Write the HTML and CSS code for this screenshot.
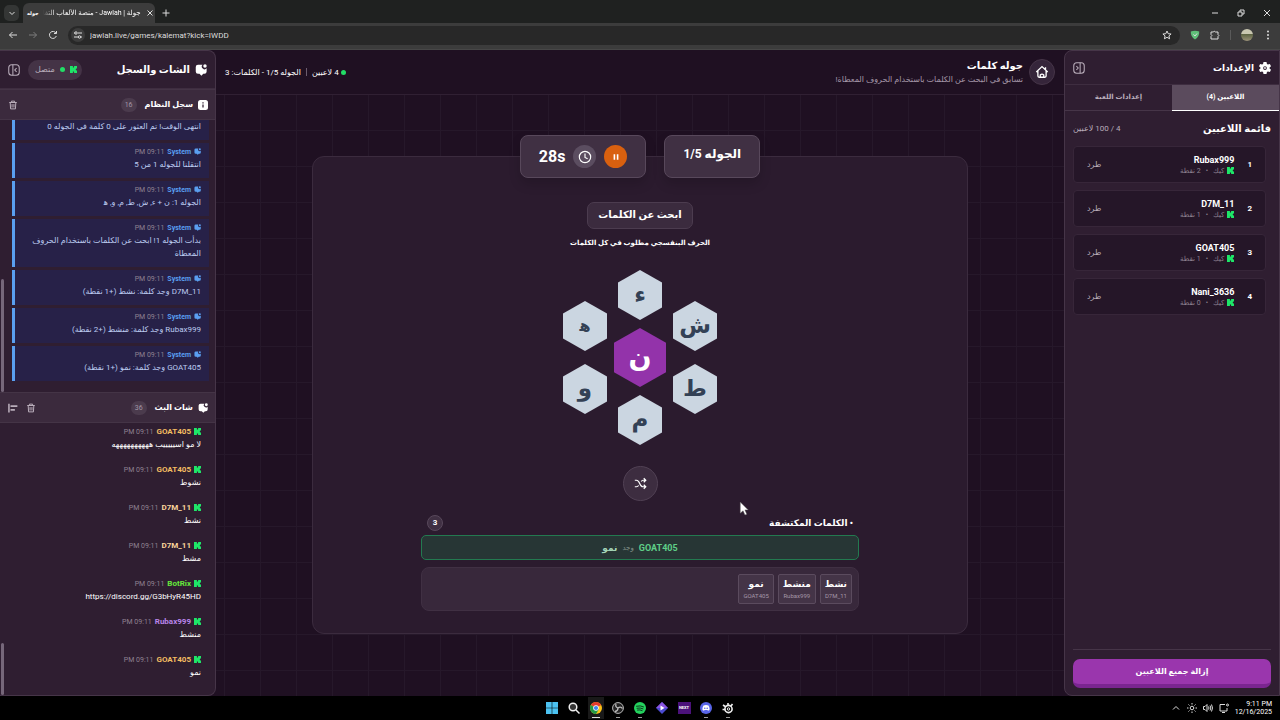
FILE: index.html
```
<!DOCTYPE html>
<html lang="ar">
<head>
    <meta charset="UTF-8">
    <meta name="viewport" content="width=device-width, initial-scale=1.0">
    <title>جولة | Jawlah</title>
    <link rel="stylesheet" href="styles.css">
</head>
<body>
    <svg class="sprite" aria-hidden="true">
        <symbol id="kick" viewBox="0 0 12 12"><path fill="currentColor" d="M0 0h5v3h1V2h1V0h5v4h-1v1h-1v2h1v1h1v4H7v-2H6V9H5v3H0z"/></symbol>
        <symbol id="chat" viewBox="0 0 16 16"><path fill="currentColor" d="M4 1h6a3.500 3.500 0 0 0 5.500 4.800V10a3 3 0 0 1-3 3H11l-2.500 2.500L6 13H4a3 3 0 0 1-3-3V4a3 3 0 0 1 3-3z"/><circle fill="currentColor" cx="13.300" cy="2.700" r="2.300"/></symbol>
        <symbol id="info" viewBox="0 0 16 16"><rect x="0" y="0" width="16" height="16" rx="4" fill="currentColor"/><path stroke="#2f1e31" stroke-width="2" d="M8 7v5M8 3.500v2"/></symbol>
        <symbol id="trash" viewBox="0 0 16 16"><path fill="none" stroke="currentColor" stroke-width="1.600" d="M2 4h12M5.500 4V1.800h5V4M3.500 4l.6 10.200h7.800L12.500 4M6.500 6.500v5.500M9.500 6.500v5.500"/></symbol>
        <symbol id="panel" viewBox="0 0 16 16"><g fill="none" stroke="currentColor" stroke-width="1.400"><rect x="1" y="1" width="14" height="14" rx="4"/><path d="M6.500 1v14M11.500 5.500L9 8l2.500 2.500"/></g></symbol>
        <symbol id="gear" viewBox="0 0 16 16"><path fill="currentColor" fill-rule="evenodd" d="M6 0h4l.6 2.600 1.300.8L14.500 2.600l1.500 3-1.900 1.800v1.200L16 10.400l-1.500 3-2.600-.8-1.300.8L10 16H6l-.6-2.600-1.300-.8-2.600.8-1.500-3 1.900-1.800V7.400L0 5.600l1.500-3 2.600.8 1.300-.8zM8 5.500a2.500 2.500 0 1 0 0 5 2.500 2.500 0 0 0 0-5z"/><circle cx="8" cy="8" r="1.200" fill="currentColor"/></symbol>
    </svg>

    <header class="browser">
        <div class="tab-strip">
            <button class="tab-search" aria-label="Search tabs"><svg viewBox="0 0 10 10"><path d="M2.500 4L5 6.500 7.500 4"/></svg></button>
            <div class="tab">
                <span class="tab-icon">جوله</span>
                <span class="tab-title" dir="rtl">جولة | Jawlah - منصة الألعاب التفا</span>
                <button aria-label="Close tab"><svg viewBox="0 0 10 10"><path d="M2.500 2.500l5 5M7.500 2.500l-5 5"/></svg></button>
            </div>
            <button class="new-tab" aria-label="New tab"><svg viewBox="0 0 10 10"><path d="M5 1.500v7M1.500 5h7"/></svg></button>
            <div class="window-buttons">
                <button aria-label="Minimize"><svg viewBox="0 0 10 10"><path d="M2 5h6"/></svg></button>
                <button aria-label="Restore"><svg viewBox="0 0 10 10"><path d="M2 4h4v4H2zM4 4V2h4v4H6"/></svg></button>
                <button aria-label="Close"><svg viewBox="0 0 10 10"><path d="M2 2l6 6M8 2L2 8"/></svg></button>
            </div>
        </div>
        <div class="toolbar">
            <button aria-label="Back"><svg viewBox="0 0 10 10"><path d="M9 5H1.500M4.500 2l-3 3 3 3"/></svg></button>
            <button class="dim" aria-label="Forward"><svg viewBox="0 0 10 10"><path d="M1 5h7.500M5.500 2l3 3-3 3"/></svg></button>
            <button aria-label="Reload"><svg viewBox="0 0 10 10"><path d="M8.300 6A3.500 3.500 0 1 1 8 3.200M8.500 1v2.500H6"/></svg></button>
            <div class="address">
                <span class="site-info"><svg viewBox="0 0 10 10"><path d="M1 3h1M5 3h4M1 7h4M8 7h1"/><circle cx="3" cy="3" r="1.200"/><circle cx="6.500" cy="7" r="1.200"/></svg></span>
                <input type="text" aria-label="Address" value="jawlah.live/games/kalemat?kick=IWDD">
                <button aria-label="Bookmark"><svg viewBox="0 0 10 10"><path d="M5 1l1.200 2.700 2.900.3-2.200 1.900.7 2.900L5 7.300 2.400 8.800l.7-2.900L.9 4l2.900-.3z"/></svg></button>
            </div>
            <button aria-label="AdGuard"><svg viewBox="0 0 10 10"><path class="shield" d="M.8 1.500Q5 .2 9.200 1.500 9.500 6.500 5 9.500.5 6.500.8 1.500z"/><path d="M3.300 4.500L5 6l2-2.500"/></svg></button>
            <button aria-label="Extensions"><svg viewBox="0 0 10 10"><path d="M1 2h2.500q.5-1.800 2 0H8v2.500q1.800.8 0 2V9H1V6.500q1.800-1 0-2z"/></svg></button>
            <span class="toolbar-divider"></span>
            <button class="avatar" aria-label="Profile"></button>
            <button aria-label="Menu"><svg class="filled" viewBox="0 0 10 10"><circle cx="5" cy="1.500" r="1"/><circle cx="5" cy="5" r="1"/><circle cx="5" cy="8.500" r="1"/></svg></button>
        </div>
    </header>

    <div class="app" dir="rtl">
        <aside class="panel settings">
            <div class="panel-header">
                <h2><svg class="icon-md"><use href="#gear"/></svg>الإعدادات</h2>
                <button class="icon-button flip" aria-label="إخفاء الإعدادات"><svg class="icon-md"><use href="#panel"/></svg></button>
            </div>
            <nav class="tabs">
                <button class="active">اللاعبين (4)</button>
                <button>إعدادات اللعبة</button>
            </nav>
            <div class="players">
                <div class="players-title">
                    <h3>قائمة اللاعبين</h3>
                    <span>4 / 100 لاعبين</span>
                </div>
                <ol>
                    <li><b>1</b><div><strong>Rubax999</strong><small><svg class="kick"><use href="#kick"/></svg>كيك <i>•</i> 2 نقطة</small></div><button>طرد</button></li>
                    <li><b>2</b><div><strong>D7M_11</strong><small><svg class="kick"><use href="#kick"/></svg>كيك <i>•</i> 1 نقطة</small></div><button>طرد</button></li>
                    <li><b>3</b><div><strong>GOAT405</strong><small><svg class="kick"><use href="#kick"/></svg>كيك <i>•</i> 1 نقطة</small></div><button>طرد</button></li>
                    <li><b>4</b><div><strong>Nani_3636</strong><small><svg class="kick"><use href="#kick"/></svg>كيك <i>•</i> 0 نقطة</small></div><button>طرد</button></li>
                </ol>
            </div>
            <div class="settings-footer"><button>إزالة جميع اللاعبين</button></div>
        </aside>

        <main class="game">
            <header class="game-header">
                <a class="home" href="#" aria-label="الرئيسية"><svg viewBox="0 0 16 16"><path d="M1.500 8L8 1.800 14.500 8M3.300 6.500v6.200q0 1.300 1.300 1.300h6.800q1.300 0 1.300-1.300V6.500M12 5V2.500M6 14v-2.500q2-2 4 0V14"/></svg></a>
                <div class="game-title">
                    <h1>جوله كلمات</h1>
                    <p>تسابق في البحث عن الكلمات باستخدام الحروف المعطاة!</p>
                </div>
                <div class="game-status">
                    <span class="dot"></span><span>4 لاعبين</span><span class="bar"></span><span>الجوله 1/5 - الكلمات: 3</span>
                </div>
            </header>

            <div class="stage">
                <div class="pills">
                    <div class="pill round">الجوله 1/5</div>
                    <div class="pill timer">
                        <button class="pause" aria-label="إيقاف مؤقت"><svg viewBox="0 0 10 10"><path d="M3 1.500v7M7 1.500v7"/></svg></button>
                        <span class="clock"><svg viewBox="0 0 16 16"><circle cx="8" cy="8" r="6.500"/><path d="M8 4v4.500l3 1.500"/></svg></span>
                        <span>28s</span>
                    </div>
                </div>
                <section class="board">
                    <h2 class="prompt">ابحث عن الكلمات</h2>
                    <p class="hint">الحرف البنفسجي مطلوب في كل الكلمات</p>
                    <div class="letters">
                        <div class="letter-column side">
                            <button class="hex">ش</button>
                            <button class="hex">ط</button>
                        </div>
                        <div class="letter-column">
                            <button class="hex">ء</button>
                            <button class="hex center">ن</button>
                            <button class="hex">م</button>
                        </div>
                        <div class="letter-column side">
                            <button class="hex small">ه&zwj;</button>
                            <button class="hex">و</button>
                        </div>
                    </div>
                    <button class="shuffle" aria-label="خلط"><svg viewBox="0 0 16 16"><path d="M1 4h2q2.500 0 4 4t4 4h3.500M1 12h2q1.700 0 2.700-1.500M9 5.500Q9.800 4 11 4h3.500M12 1.500L14.500 4 12 6.500M12 9.500l2.500 2.500-2.500 2.500"/></svg></button>
                    <div class="found">
                        <div class="found-title">
                            <h3>• الكلمات المكتشفة</h3>
                            <span>3</span>
                        </div>
                        <div class="found-alert"><strong>GOAT405</strong><small>وجد</small><b>نمو</b></div>
                        <ul class="words">
                            <li><b>نشط</b><small>D7M_11</small></li>
                            <li><b>منشط</b><small>Rubax999</small></li>
                            <li><b>نمو</b><small>GOAT405</small></li>
                        </ul>
                    </div>
                </section>
            </div>
            <svg class="cursor" viewBox="0 0 10 16"><path d="M1 1v12l3-2.500L6 15l2-1-2-4.500h3.500z"/></svg>
        </main>

        <aside class="panel chat">
            <div class="panel-header chat-header">
                <h2><svg class="icon-md"><use href="#chat"/></svg>الشات والسجل</h2>
                <span class="connected"><svg class="kick"><use href="#kick"/></svg><span class="dot"></span>متصل</span>
                <button class="icon-button" aria-label="إخفاء الشات"><svg class="icon-md"><use href="#panel"/></svg></button>
            </div>
            <div class="feed-header">
                <h3><svg class="icon-sm"><use href="#info"/></svg>سجل النظام</h3><span class="count">16</span>
                <button class="icon-button" aria-label="مسح السجل"><svg class="icon-sm"><use href="#trash"/></svg></button>
            </div>
            <div class="feed log">
                <article><p>انتهى الوقت! تم العثور على 0 كلمة في الجوله 0</p></article>
                <article><header><svg><use href="#chat"/></svg><b>System</b><time>09:11 PM</time></header><p>انتقلنا للجوله 1 من 5</p></article>
                <article><header><svg><use href="#chat"/></svg><b>System</b><time>09:11 PM</time></header><p>الجوله 1: ن + ء, ش, ط, م, و, ه&zwj;</p></article>
                <article><header><svg><use href="#chat"/></svg><b>System</b><time>09:11 PM</time></header><p>بدأت الجوله 1! ابحث عن الكلمات باستخدام الحروف المعطاة</p></article>
                <article><header><svg><use href="#chat"/></svg><b>System</b><time>09:11 PM</time></header><p>D7M_11 وجد كلمة: نشط (+1 نقطة)</p></article>
                <article><header><svg><use href="#chat"/></svg><b>System</b><time>09:11 PM</time></header><p>Rubax999 وجد كلمة: منشط (+2 نقطة)</p></article>
                <article><header><svg><use href="#chat"/></svg><b>System</b><time>09:11 PM</time></header><p>GOAT405 وجد كلمة: نمو (+1 نقطة)</p></article>
                <span class="scroll-thumb long"></span>
            </div>
            <div class="feed-header">
                <h3><svg class="icon-sm"><use href="#chat"/></svg>شات البث</h3><span class="count">36</span>
                <button class="icon-button" aria-label="مسح الشات"><svg class="icon-sm"><use href="#trash"/></svg></button>
                <button class="icon-button" aria-label="محاذاة"><svg class="icon-sm" viewBox="0 0 16 16"><path fill="none" stroke="currentColor" stroke-width="2.500" d="M1.500 1v14M4 5h11M4 11h7"/></svg></button>
            </div>
            <div class="feed stream">
                <article><header><svg><use href="#kick"/></svg><b class="gold">GOAT405</b><time>09:11 PM</time></header><p>لا مو اسيييييب ههههههههههه</p></article>
                <article><header><svg><use href="#kick"/></svg><b class="gold">GOAT405</b><time>09:11 PM</time></header><p>نشوط</p></article>
                <article><header><svg><use href="#kick"/></svg><b class="cream">D7M_11</b><time>09:11 PM</time></header><p>نشط</p></article>
                <article><header><svg><use href="#kick"/></svg><b class="cream">D7M_11</b><time>09:11 PM</time></header><p>مشط</p></article>
                <article><header><svg><use href="#kick"/></svg><b class="green">BotRix</b><time>09:11 PM</time></header><p>https://discord.gg/G3bHyR45HD</p></article>
                <article><header><svg><use href="#kick"/></svg><b class="violet">Rubax999</b><time>09:11 PM</time></header><p>منشط</p></article>
                <article><header><svg><use href="#kick"/></svg><b class="gold">GOAT405</b><time>09:11 PM</time></header><p>نمو</p></article>
                <span class="scroll-thumb short"></span>
            </div>
        </aside>
    </div>

    <footer class="taskbar">
        <div class="apps">
            <button aria-label="Start"><svg viewBox="0 0 12 12"><path fill="#4cc2f1" d="M0 0h5.700v5.700H0zM6.300 0H12v5.700H6.300zM0 6.300h5.700V12H0zM6.300 6.300H12V12H6.300z"/></svg></button>
            <button aria-label="Search"><svg viewBox="0 0 12 12"><circle cx="5" cy="5" r="3.800" fill="#333" stroke="#eee" stroke-width="1.500"/><path stroke="#eee" stroke-width="1.500" d="M8 8l3.500 3.500"/></svg></button>
            <button class="running current" aria-label="Chrome"><svg viewBox="0 0 12 12"><circle cx="6" cy="6" r="6" fill="#fbc116"/><path fill="#e33b2e" d="M6 6L.8 3A6 6 0 0 1 11.200 3z"/><path fill="#229a48" d="M6 6L.8 3A6 6 0 0 0 6 12l3-5z"/><circle cx="6" cy="6" r="2.800" fill="#fff"/><circle cx="6" cy="6" r="2.100" fill="#3f83f0"/></svg></button>
            <button class="running" aria-label="OBS"><svg viewBox="0 0 12 12"><circle cx="6" cy="6" r="5.400" fill="#222" stroke="#bbb"/><path fill="none" stroke="#bbb" stroke-width="1.300" d="M6 6Q3 5 4 2M6 6q2.500-2 4.500.5M6 6q0 3-3 3.500"/></svg></button>
            <button class="running" aria-label="Spotify"><svg viewBox="0 0 12 12"><circle cx="6" cy="6" r="6" fill="#24d35e"/><path fill="none" stroke="#10391e" stroke-linecap="round" d="M2.500 4.200q4-1 7 .6M3 6.200q3.300-.8 6 .6M3.500 8q2.500-.6 4.700.6"/></svg></button>
            <button aria-label="Media"><svg viewBox="0 0 12 12"><path fill="#4b4ad0" d="M6 0l6 6-6 6-6-6z"/><path fill="#8a54e0" d="M6 0l6 6H0z"/><path fill="#fff" d="M4.500 3.500L8.500 6l-4 2.500z"/></svg></button>
            <button class="running next" aria-label="Next">NEXT</button>
            <button class="running" aria-label="Discord"><svg viewBox="0 0 12 12"><circle cx="6" cy="6" r="6" fill="#5865e8"/><path fill="#fff" d="M3.500 3.500q2.500-1 5 0 1.300 2.200 1 4.500l-1.500.8-.6-.9H4.600l-.6.9L2.500 8q-.3-2.300 1-4.500z"/><circle cx="4.800" cy="6.200" r=".8" fill="#5865e8"/><circle cx="7.200" cy="6.200" r=".8" fill="#5865e8"/></svg></button>
            <button class="running" aria-label="SteelSeries"><svg viewBox="0 0 12 12"><g fill="none" stroke="#eee"><circle cx="6.500" cy="7" r="3.600" stroke-width="1.600"/><circle cx="6.500" cy="7" r="1.200"/><path stroke-width="1.600" d="M1 3l3 2M6 1v2.500M10.500 2L9 4M.5 7.500h3"/></g></svg></button>
        </div>
        <div class="tray">
            <svg viewBox="0 0 10 10"><path d="M2 6.500l3-3 3 3"/></svg>
            <svg viewBox="0 0 10 10"><circle cx="5" cy="5" r="1.800"/><path d="M5 0v1.500M5 8.500V10M0 5h1.500M8.500 5H10M1.500 1.500l1 1M7.500 7.500l1 1M8.500 1.500l-1 1M1.500 8.500l1-1"/></svg>
            <svg viewBox="0 0 10 10"><path d="M.5 3.500h1.500L4 1.500v7l-2-2H.5zM5.500 3.500q1 1.500 0 3M7 2.500q1.700 2.500 0 5M8.500 1.500q2 3.500 0 7"/></svg>
            <svg viewBox="0 0 10 10"><path d="M6 1.500H1v6.500h7V5M3 9.500h3"/><circle cx="8.500" cy="2" r="1"/></svg>
            <div class="date"><span>9:11 PM</span><span>12/16/2025</span></div>
        </div>
    </footer>
</body>
</html>
```
FILE: styles.css
```
* {
    box-sizing: border-box;
}
body {
    margin: 0;
    height: 100vh;
    display: flex;
    flex-direction: column;
    overflow: hidden;
    background: #000;
    color: #fff;
    font-family: Roboto, "DejaVu Sans", sans-serif;
    font-size: 8px;
}
h1, h2, h3, p, ul, ol {
    margin: 0;
    padding: 0;
    list-style: none;
}
button {
    display: flex;
    align-items: center;
    justify-content: center;
    padding: 0;
    border: 0;
    background: none;
    color: inherit;
    font: inherit;
}
small {
    font-size: 7px;
}
.sprite {
    display: none;
}

/* browser */
.browser svg, .tray svg {
    width: 10px;
    height: 10px;
    fill: none;
    stroke: #ddd;
    stroke-width: 1;
}
.browser svg.filled {
    fill: #ddd;
    stroke: none;
}
.tab-strip {
    display: flex;
    align-items: center;
    height: 23px;
    padding: 3px 4px 0;
    background: #1f2120;
}
.tab-search {
    width: 15px;
    height: 16px;
    border-radius: 5px;
    background: #343635;
}
.tab {
    display: flex;
    align-items: center;
    gap: 4px;
    width: 132px;
    height: 20px;
    margin-left: 4px;
    padding: 0 4px;
    border-radius: 6px 6px 0 0;
    background: #3c3c3c;
}
.tab-icon {
    font-size: 5px;
    font-weight: bold;
}
.tab-title {
    flex: 1;
    font-size: 7px;
    white-space: nowrap;
    mask-image: linear-gradient(to right, transparent, #000 12px);
}
.new-tab {
    margin-left: 6px;
}
.window-buttons {
    display: flex;
    gap: 16px;
    margin-left: auto;
    padding-right: 4px;
}
.toolbar {
    display: flex;
    align-items: center;
    gap: 10px;
    height: 27px;
    padding: 0 7px 2px 8px;
    background: #3c3c3c;
    border-bottom: 1px solid #474747;
}
.toolbar .dim {
    opacity: 0.4;
}
.address {
    flex: 1;
    display: flex;
    align-items: center;
    gap: 5px;
    height: 19px;
    padding: 0 8px 0 3px;
    border-radius: 10px;
    background: #282828;
}
.site-info {
    display: flex;
    padding: 2px;
    border-radius: 50%;
    background: #3c3c3c;
}
.address input {
    flex: 1;
    border: 0;
    padding: 0;
    background: none;
    color: #ddd;
    font: inherit;
}
.browser .shield {
    fill: #5fbf78;
    stroke: none;
}
.toolbar-divider {
    width: 1px;
    height: 10px;
    background: #5a5a5a;
}
.avatar {
    width: 12px;
    height: 12px;
    border-radius: 50%;
    background: linear-gradient(#c9c7b0 40%, #59613f 40%, #9b9279);
}

/* app */
.app {
    flex: 1;
    min-height: 0;
    display: grid;
    grid-template-columns: 216px 1fr 216px;
    background: #1f1022;
}
.panel {
    display: flex;
    flex-direction: column;
    min-height: 0;
    overflow: hidden;
    background: #2f1e31;
    border: 1px solid #463548;
}
.settings {
    border-radius: 8px 0 0 8px;
}
.chat {
    border-radius: 0 8px 8px 0;
    border-left: 0;
}
.panel-header {
    display: flex;
    align-items: center;
    justify-content: space-between;
    height: 34px;
    padding: 0 8px;
    border-bottom: 1px solid #3e2d40;
}
.panel-header h2 {
    display: flex;
    align-items: center;
    gap: 5px;
    font-size: 9px;
}
.chat-header {
    height: 38px;
    flex-shrink: 0;
}
.chat-header h2 {
    margin-left: auto;
    gap: 5px;
    font-size: 10px;
}
.icon-md {
    width: 12px;
    height: 12px;
}
.icon-sm {
    width: 10px;
    height: 10px;
}
.icon-button {
    color: #b9adba;
}
.flip svg {
    transform: scaleX(-1);
}
.kick {
    width: 7px;
    height: 7px;
    color: #1ee668;
}
.dot {
    width: 5px;
    height: 5px;
    border-radius: 50%;
    background: #22dd66;
}
.connected {
    display: flex;
    align-items: center;
    gap: 5px;
    height: 20px;
    margin-left: 8px;
    padding: 0 5px 0 7px;
    border-radius: 10px;
    background: #443346;
    color: #b9adba;
}

/* settings */
.tabs {
    display: grid;
    grid-template-columns: 1fr 1fr;
}
.tabs button {
    height: 26px;
    padding-bottom: 2px;
    border-bottom: 1px solid #463548;
    color: #b9adba;
    font-size: 7px;
    font-weight: bold;
}
.tabs .active {
    background: #5b4b5d;
    border-bottom-color: #fff;
    color: #fff;
}
.players {
    flex: 1;
    padding: 8px;
}
.players-title {
    display: flex;
    align-items: center;
    justify-content: space-between;
    height: 18px;
    margin-bottom: 9px;
}
.players-title h3 {
    font-size: 10px;
}
.players-title span {
    color: #b9adba;
}
.players ol {
    display: flex;
    flex-direction: column;
    gap: 7px;
    padding-right: 5px;
}
.players li {
    display: flex;
    align-items: center;
    gap: 13px;
    height: 37px;
    padding: 0 13px;
    border: 1px solid #372639;
    border-radius: 4px;
    background: #251628;
}
.players li div {
    flex: 1;
    display: flex;
    flex-direction: column;
}
.players strong {
    font-size: 9px;
    line-height: 12px;
}
.players small {
    display: flex;
    align-items: center;
    gap: 3px;
    line-height: 10px;
    color: #8f8291;
}
.players i {
    padding: 0 2px;
    font-style: normal;
}
.players li button {
    color: #b9adba;
}
.settings-footer {
    margin: 0 8px;
    padding: 9px 0 7px;
    border-top: 1px solid #463548;
}
.settings-footer button {
    width: 100%;
    height: 29px;
    border-bottom: 4px solid #7a2590;
    border-radius: 7px;
    background: #9a36ad;
    font-weight: bold;
}

/* game */
.game {
    position: relative;
    background-image:
        linear-gradient(to right, #26182a 1px, transparent 1px),
        linear-gradient(#26182a 1px, transparent 1px);
    background-size: 36px 36px;
    background-position: 8px 8px;
}
.game-header {
    display: flex;
    align-items: center;
    gap: 6px;
    height: 45px;
    padding: 0 9px;
    background: #1f1022;
    border-bottom: 1px solid #302033;
}
.home {
    display: flex;
    align-items: center;
    justify-content: center;
    width: 26px;
    height: 26px;
    border: 1px solid #463548;
    border-radius: 50%;
    background: #35253a;
}
.home svg {
    width: 14px;
    height: 14px;
    fill: none;
    stroke: #fff;
    stroke-width: 1.5;
}
.game-title h1 {
    font-size: 10px;
    line-height: 14px;
}
.game-title p {
    line-height: 13px;
    color: #a597a8;
}
.game-status {
    display: flex;
    align-items: center;
    gap: 5px;
    margin-right: auto;
}
.game-status .dot {
    margin-left: -3px;
}
.bar {
    width: 1px;
    height: 8px;
    background: #6b5c6e;
}
.stage {
    display: flex;
    flex-direction: column;
    align-items: center;
    padding: 40px 16px 0;
}
.pills {
    z-index: 1;
    display: flex;
    gap: 18px;
    margin-bottom: -22px;
}
.pill {
    display: flex;
    align-items: center;
    height: 43px;
    padding: 0 18px;
    border: 1px solid #58485b;
    border-radius: 8px;
    background: #403043;
    box-shadow: 0 6px 12px rgba(0, 0, 0, 0.15);
    font-size: 12px;
    font-weight: bold;
}
.round {
    padding-bottom: 5px;
}
.timer {
    gap: 8px;
    font-size: 16px;
}
.pause, .clock {
    display: flex;
    align-items: center;
    justify-content: center;
    width: 23px;
    height: 23px;
    border-radius: 50%;
    background: #d9600f;
}
.clock {
    background: #5b4d60;
}
.pill svg {
    width: 8px;
    height: 8px;
    fill: none;
    stroke: #fff;
    stroke-width: 2;
}
.pill .clock svg {
    width: 14px;
    height: 14px;
    stroke-width: 1.3;
}
.board {
    display: flex;
    flex-direction: column;
    align-items: center;
    width: 100%;
    max-width: 656px;
    padding: 45px 16px 22px;
    border: 1px solid #3b2b3e;
    border-radius: 12px;
    background: #2b1b2e;
}
.prompt {
    height: 27px;
    padding: 0 10px;
    border: 1px solid #4c3c4f;
    border-radius: 7px;
    background: #3b2b3e;
    font-size: 10px;
    line-height: 24px;
}
.hint {
    margin: 7px 0 20px;
    font-size: 7px;
    font-weight: bold;
    line-height: 14px;
}
.letters {
    display: flex;
    align-items: center;
    gap: 7px;
}
.letter-column {
    display: flex;
    flex-direction: column;
    align-items: center;
    gap: 8px;
}
.letter-column.side {
    gap: 13px;
}
.hex {
    width: 44px;
    height: 50px;
    clip-path: polygon(50% 0, 100% 25%, 100% 75%, 50% 100%, 0 75%, 0 25%);
    background: #cbd6e1;
    color: #334155;
    font-size: 23px;
    font-weight: bold;
    line-height: 24px;
}
.hex.center {
    width: 52px;
    height: 59px;
    background: #9333aa;
    color: #fff;
    font-size: 27px;
}
.hex.small {
    font-size: 16px;
}
.shuffle {
    width: 35px;
    height: 35px;
    margin: 21px 0 13px;
    border: 1px solid #514154;
    border-radius: 50%;
    background: #3d2d40;
}
.shuffle svg {
    width: 13px;
    height: 13px;
    fill: none;
    stroke: #fff;
    stroke-width: 1.5;
}
.found {
    width: 100%;
    max-width: 438px;
}
.found-title {
    display: flex;
    align-items: center;
    justify-content: space-between;
    height: 17px;
    margin-bottom: 4px;
    padding: 0 6px;
}
.found-title h3 {
    font-size: 9px;
}
.found-title span {
    width: 16px;
    height: 16px;
    border: 1px solid #58485b;
    border-radius: 50%;
    background: #403043;
    font-weight: bold;
    line-height: 14px;
    text-align: center;
}
.found-alert {
    display: flex;
    align-items: center;
    justify-content: center;
    gap: 5px;
    height: 25px;
    margin-bottom: 7px;
    border: 1px solid #237a50;
    border-radius: 5px;
    background: #273635;
    font-size: 9px;
}
.found-alert strong {
    color: #5fce88;
}
.found-alert small {
    color: #839087;
}
.found-alert b {
    color: #a5d5b8;
}
.words {
    display: flex;
    gap: 4px;
    height: 44px;
    padding: 6px;
    border: 1px solid #403043;
    border-radius: 8px;
    background: #38283b;
}
.words li {
    display: flex;
    flex-direction: column;
    align-items: center;
    justify-content: center;
    height: 30px;
    padding: 0 4px;
    border: 1px solid #5b4b5e;
    border-radius: 2px;
    background: #443447;
}
.words b {
    font-size: 9px;
    line-height: 13px;
}
.words small {
    font-size: 6px;
    line-height: 9px;
    color: #a597a8;
}
.cursor {
    position: absolute;
    top: 451px;
    left: 523px;
    width: 10px;
    height: 15px;
    fill: #fff;
    stroke: #555;
    stroke-width: 0.5;
}

/* chat */
.feed-header {
    flex-shrink: 0;
    display: flex;
    align-items: center;
    gap: 8px;
    height: 31px;
    padding: 0 7px 0 8px;
    border-top: 1px solid #443446;
    border-bottom: 1px solid #443446;
    background: #3b2a3d;
}
.feed-header h3 {
    display: flex;
    align-items: center;
    gap: 5px;
    font-size: 8px;
}
.count {
    height: 14px;
    margin-left: auto;
    padding: 0 4px;
    border-radius: 7px;
    background: #4b3b4d;
    color: #a597a8;
    font-size: 7px;
    line-height: 14px;
}
.feed {
    position: relative;
    flex: 1;
    display: flex;
    flex-direction: column;
    justify-content: flex-end;
    min-height: 0;
    overflow: hidden;
}
.feed article {
    flex-shrink: 0;
    padding: 4px 8px 5px;
}
.feed header {
    display: flex;
    align-items: center;
    gap: 3px;
    height: 13px;
}
.feed header svg {
    width: 7px;
    height: 7px;
    color: #1ee668;
}
.feed time {
    color: #8f8291;
    font-size: 7px;
}
.feed p {
    line-height: 13px;
}
.log {
    gap: 3px;
    padding: 0 6px 11px 12px;
}
.log article {
    padding: 2px 8px 7px;
    border-left: 3px solid #5a9ff0;
    background: #272148;
    color: #bccbf0;
}
.log header svg, .log b {
    color: #5a9ff0;
}
.log b {
    font-size: 7px;
}
.stream {
    gap: 3px;
    padding: 0 6px 11px;
}
.stream .gold {
    color: #f3bd62;
}
.stream .cream {
    color: #fad59b;
}
.stream .green {
    color: #65e63c;
}
.stream .violet {
    color: #b985e8;
}
.scroll-thumb {
    position: absolute;
    bottom: 0;
    left: 1px;
    width: 3px;
    border-radius: 2px;
    background: #76677a;
}
.scroll-thumb.long {
    height: 113px;
}
.scroll-thumb.short {
    height: 52px;
}

/* taskbar */
.taskbar {
    display: grid;
    grid-template-columns: 1fr auto 1fr;
    align-items: center;
    height: 24px;
    padding: 0 8px;
}
.apps {
    grid-column: 2;
    display: flex;
    gap: 6px;
}
.apps button {
    width: 16px;
    height: 22px;
    border-bottom: 1px solid transparent;
}
.apps svg {
    width: 12px;
    height: 12px;
}
.apps .running {
    background: linear-gradient(#999, #999) bottom / 4px 1px no-repeat;
}
.apps .current {
    background: linear-gradient(#ddd, #ddd) bottom / 8px 1px no-repeat #191919;
}
.apps .next {
    background: linear-gradient(#4b127a, #4b127a) center / 13px 12px no-repeat;
    font-size: 4px;
    font-weight: bold;
}
.tray {
    display: flex;
    align-items: center;
    justify-content: flex-end;
    gap: 6px;
}
.date {
    display: flex;
    flex-direction: column;
    align-items: flex-end;
    font-size: 7px;
    line-height: 8px;
}
```
